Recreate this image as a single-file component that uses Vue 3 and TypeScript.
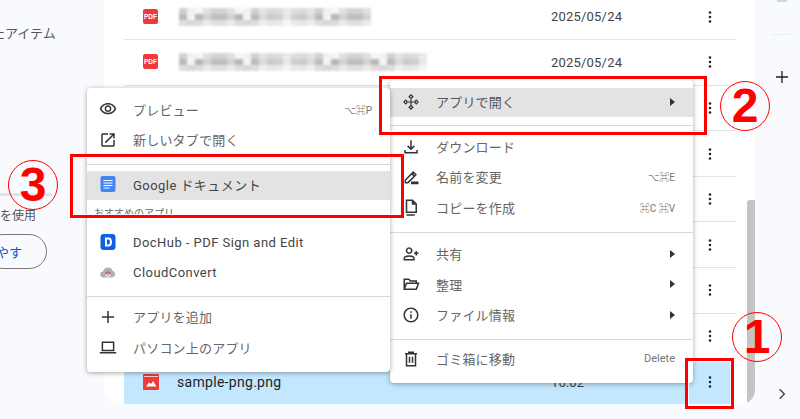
<script setup lang="ts">
interface Entry {
  label: string
  icon?: string
  hint?: string
  arrow?: boolean
}

const icons: Record<string, { d: string; stroke?: boolean }> = {
  eye: { d: 'M12 6c3.79 0 7.17 2.13 8.82 5.5C19.17 14.87 15.79 17 12 17s-7.17-2.13-8.82-5.5C4.83 8.13 8.21 6 12 6m0-2C7 4 2.73 7.11 1 11.5 2.73 15.89 7 19 12 19s9.27-3.11 11-7.5C21.27 7.11 17 4 12 4zm0 5c1.38 0 2.5 1.12 2.5 2.5S13.38 14 12 14s-2.5-1.12-2.5-2.5S10.62 9 12 9m0-2c-2.48 0-4.5 2.02-4.5 4.5S9.52 16 12 16s4.5-2.02 4.5-4.5S14.48 7 12 7z' },
  newtab: { d: 'M19 19H5V5h7V3H5c-1.11 0-2 .9-2 2v14c0 1.1.89 2 2 2h14c1.1 0 2-.9 2-2v-7h-2v7zM14 3v2h3.59l-9.83 9.83 1.41 1.41L19 6.41V10h2V3h-7z' },
  move: { stroke: true, d: 'M12 7.5v9M7.5 12h9M9.5 5 12 2.5 14.5 5 13 6.5h-2zM9.5 19l2.5 2.5 2.5-2.5-1.5-1.5h-2zM5 9.5 2.5 12 5 14.5 6.5 13v-2zM19 9.5 21.5 12 19 14.5 17.5 13v-2z' },
  download: { stroke: true, d: 'M12 3v12M7.5 10.5 12 15l4.5-4.5M4 16v3.5h16V16' },
  rename: { stroke: true, d: 'M4.5 19.5v-3.5L15 5.5l3.5 3.5L8 19.5zM13 7.5l3.5 3.5M13 19h8v1.5h-8z' },
  copy: { stroke: true, d: 'M6 3h8l5 5v11H6zM14 3v5h5M6 22.5h11' },
  share: { stroke: true, d: 'M9.5 4a3.5 3.5 0 1 0 .01 0zM3 19.5v-1.5c0-2.5 3.5-3.5 6.5-3.5s6.5 1 6.5 3.5v1.5zM19 8v6M16 11h6' },
  folder: { stroke: true, d: 'M3 19V5.5h6l2 2.5h8v3M3 19l3-8h16l-3 8z' },
  info: { d: 'M11 7h2v2h-2zm0 4h2v6h-2zm1-9C6.48 2 2 6.48 2 12s4.48 10 10 10 10-4.48 10-10S17.52 2 12 2zm0 18c-4.41 0-8-3.59-8-8s3.59-8 8-8 8 3.59 8 8-3.59 8-8 8z' },
  trash: { stroke: true, d: 'M4 5h16M9 5V3h6v2M6 5v16h12V5M10 9v8M14 9v8' },
  plus: { stroke: true, d: 'M12 4v16M4 12h16' },
  laptop: { stroke: true, d: 'M4.5 5.5h15v11h-15zM1 19.5h22' },
}

const leftTop: Entry[] = [
  { label: 'プレビュー', icon: 'eye', hint: '⌥⌘P' },
  { label: '新しいタブで開く', icon: 'newtab' },
]
const leftBottom: Entry[] = [
  { label: 'アプリを追加', icon: 'plus' },
  { label: 'パソコン上のアプリ', icon: 'laptop' },
]
const rightGroups: Entry[][] = [
  [
    { label: 'ダウンロード', icon: 'download' },
    { label: '名前を変更', icon: 'rename', hint: '⌥⌘E' },
    { label: 'コピーを作成', icon: 'copy', hint: '⌘C ⌘V' },
  ],
  [
    { label: '共有', icon: 'share', arrow: true },
    { label: '整理', icon: 'folder', arrow: true },
    { label: 'ファイル情報', icon: 'info', arrow: true },
  ],
  [{ label: 'ゴミ箱に移動', icon: 'trash', hint: 'Delete' }],
]

interface Row {
  kind: string
  cols: number
  date: string
  name?: string
}
const rows: Row[] = [
  { kind: 'pdf', cols: 24, date: '2025/05/24' },
  { kind: 'pdf', cols: 31, date: '2025/05/24' },
  { kind: 'none', cols: 0, date: '' },
  { kind: 'none', cols: 0, date: '' },
  { kind: 'none', cols: 0, date: '' },
  { kind: 'none', cols: 0, date: '' },
  { kind: 'none', cols: 0, date: '' },
  { kind: 'none', cols: 0, date: '' },
  { kind: 'png', cols: 0, date: '16:02', name: 'sample-png.png' },
]

function cells(cols: number): string[] {
  const out: string[] = []
  for (let r = 0; r < 3; r++) {
    for (let c = 0; c < cols; c++) {
      const n = (c * 37 + r * 53 + c * c * 11) % 17
      const light = r === 1 ? 70 + n * 1.6 : r === 0 ? 82 + n * 0.9 : 84 + n * 0.8
      out.push(`hsl(0 0% ${light}%)`)
    }
  }
  return out
}
</script>

<template>
  <div class="page">
    <aside class="side">
      <div class="side-label">たアイテム</div>
      <div class="storage-bar"></div>
      <div class="side-use">を使用</div>
      <div class="side-btn">やす</div>
    </aside>

    <main class="panel">
      <div class="list">
        <div v-for="(row, i) in rows" :key="i" class="row" :class="{ selected: row.kind === 'png' }">
          <span class="file-icon">
            <span v-if="row.kind === 'pdf'" class="pdf">PDF</span>
            <svg v-else-if="row.kind === 'png'" viewBox="0 0 16 16" width="16" height="16">
              <path fill="#ee3a3a" d="M1 0h14a1 1 0 0 1 1 1v14a1 1 0 0 1-1 1H1a1 1 0 0 1-1-1V1a1 1 0 0 1 1-1z" />
              <path fill="#fff" d="M3 12.5l3-4 2 1.5 2-3 3.5 5.5zM1 2h14v.8H1z" />
            </svg>
          </span>
          <span class="name">
            <span v-if="row.cols" class="mosaic" :style="{ gridTemplateColumns: `repeat(${row.cols}, 8px)` }">
              <i v-for="(c, k) in cells(row.cols)" :key="k" :style="{ background: c }"></i>
            </span>
            <template v-else>{{ row.name }}</template>
          </span>
          <span class="date">{{ row.date }}</span>
          <svg class="more" viewBox="0 0 24 24" width="18" height="18">
            <circle cx="12" cy="6" r="1.7" /><circle cx="12" cy="12" r="1.7" /><circle cx="12" cy="18" r="1.7" />
          </svg>
        </div>
      </div>
      <div class="scrollbar"></div>
    </main>

    <aside class="rail">
      <div class="rail-top"></div>
      <div class="rail-line"></div>
      <svg class="rail-plus" viewBox="0 0 24 24" width="18" height="18"><path d="M12 4v16M4 12h16" stroke="#222" stroke-width="1.8" fill="none" /></svg>
      <svg class="rail-chev" viewBox="0 0 24 24" width="14" height="14"><path d="M8 4l8 8-8 8" stroke="#444" stroke-width="2.4" fill="none" /></svg>
    </aside>

    <!-- right context menu -->
    <div class="menu menu-right">
      <div class="item active">
        <svg class="ic" viewBox="0 0 24 24"><path :d="icons.move.d" fill="none" stroke="#333" stroke-width="1.6" /></svg>
        <span class="label">アプリで開く</span>
        <span class="arrow"></span>
      </div>
      <template v-for="(group, g) in rightGroups" :key="g">
        <div class="divider" :class="{ tight: g === 0, tighter: g === 2 }"></div>
        <div v-for="e in group" :key="e.label" class="item">
          <svg class="ic" viewBox="0 0 24 24">
            <path :d="icons[e.icon!].d" :fill="icons[e.icon!].stroke ? 'none' : '#333'" :stroke="icons[e.icon!].stroke ? '#333' : 'none'" stroke-width="2" />
          </svg>
          <span class="label">{{ e.label }}</span>
          <span v-if="e.hint" class="hint" :class="{ sym: e.hint !== 'Delete' }">{{ e.hint }}</span>
          <span v-if="e.arrow" class="arrow"></span>
        </div>
      </template>
    </div>

    <!-- left sub menu -->
    <div class="menu menu-left">
      <div v-for="e in leftTop" :key="e.label" class="item">
        <svg class="ic" viewBox="0 0 24 24">
          <path :d="icons[e.icon!].d" fill="#333" />
        </svg>
        <span class="label">{{ e.label }}</span>
        <span v-if="e.hint" class="hint sym">{{ e.hint }}</span>
      </div>
      <div class="divider tight"></div>
      <div class="item active">
        <svg class="ic" viewBox="0 0 18 18">
          <rect x="1.5" y="1" width="15" height="16" rx="2" fill="#4285f4" />
          <path d="M4.5 5.5h9M4.5 8h9M4.5 10.5h9M4.5 13h6" stroke="#fff" stroke-width="1.2" />
        </svg>
        <span class="label latin">Google ドキュメント</span>
      </div>
      <div class="caption">おすすめのアプリ</div>
      <div class="item">
        <svg class="ic" viewBox="0 0 18 18">
          <rect x="1.5" y="1" width="15" height="16" rx="3" fill="#0f62e6" />
          <path d="M6 4.5h3.5c2.5 0 3.5 2 3.5 4.5s-1 4.500-3.500 4.500H6zM8 6.500v5h1.300c1.200 0 1.700-1 1.700-2.500s-.5-2.500-1.700-2.500z" fill="#fff" fill-rule="evenodd" />
        </svg>
        <span class="label latin">DocHub - PDF Sign and Edit</span>
      </div>
      <div class="item">
        <svg class="ic" viewBox="0 0 18 18">
          <path d="M4.5 14a3 3 0 0 1-.5-6 5 5 0 0 1 9.600-.8A3.500 3.500 0 0 1 13.500 14z" fill="#b0b0b0" transform="translate(0 -.5)" />
          <path d="M7 10a2 2 0 0 1 4 0" stroke="#e04040" stroke-width="1.2" fill="none" />
          <path d="M11 10.5a2 2 0 0 1-4 0" stroke="#fff" stroke-width="1" fill="none" />
        </svg>
        <span class="label latin">CloudConvert</span>
      </div>
      <div class="divider low"></div>
      <div v-for="e in leftBottom" :key="e.label" class="item">
        <svg class="ic" viewBox="0 0 24 24">
          <path :d="icons[e.icon!].d" fill="none" stroke="#333" stroke-width="2" />
        </svg>
        <span class="label">{{ e.label }}</span>
      </div>
    </div>

    <!-- annotations -->
    <div class="box box-1"></div>
    <div class="box box-2"></div>
    <div class="box box-3"></div>
    <div class="mark mark-1">1</div>
    <div class="mark mark-2">2</div>
    <div class="mark mark-3">3</div>
  </div>
</template>

<style>
html, body { margin: 0; padding: 0; background: #f8fafd; }
</style>

<style scoped>
.page {
  position: relative;
  width: 800px;
  height: 419px;
  overflow: hidden;
  background: #f8fafd;
  display: grid;
  grid-template-columns: 104px 651px 45px;
  font-family: "Roboto", "Noto Sans CJK JP", "DejaVu Sans", sans-serif;
  color: #444;
}

.side { display: flex; flex-direction: column; font-size: 13px; color: #555; overflow: hidden; }
.side-label { margin: 25px 0 0 -8px; line-height: 18px; white-space: nowrap; }
.storage-bar { width: 52px; height: 3px; background: #e1e3e6; margin-top: 150px; }
.side-use { margin-top: 11px; line-height: 18px; font-size: 12px; }
.side-btn {
  width: 62px; height: 35px; margin: 9px 0 0 -15px; box-sizing: border-box;
  border: 1px solid #777; border-radius: 18px; color: #0b57d0;
  display: flex; align-items: center; justify-content: flex-end; padding-right: 24px;
}

.panel {
  position: relative;
  height: 404px;
  background: #fff;
  border-radius: 0 0 14px 16px;
  overflow: hidden;
  padding-left: 20px;
  box-sizing: border-box;
}
.list { width: 612px; margin-top: -5.5px; }
.row {
  height: 45.6px;
  box-sizing: border-box;
  display: flex;
  align-items: center;
  border-bottom: 1px solid #e3e3e3;
  padding-left: 19px;
  font-size: 13px;
}
.row.selected { background: #c2e7ff; border-bottom: none; width: 610px; }
.file-icon { width: 16px; height: 16px; flex: none; display: flex; }
.pdf {
  width: 15px; height: 15px; border-radius: 2px; background: #ee3a3a; color: #fff;
  font: bold 6.5px/15px "Liberation Sans", sans-serif; text-align: center;
}
.name { width: 374px; margin-left: 18px; flex: none; font-size: 14px; color: #1f1f1f; letter-spacing: .3px; }
.mosaic { display: grid; grid-auto-rows: 6px; filter: blur(1.2px); margin-left: 2px; }
.mosaic i { display: block; }
.date { width: 150px; flex: none; font-size: 13px; color: #444; letter-spacing: .2px; }
.more { flex: none; fill: #222; }

.scrollbar {
  position: absolute; right: 0; top: 200px; bottom: 0; width: 8px;
  background: #c4c4c4; border-radius: 5px 0 14px 0;
}

.rail { display: flex; flex-direction: column; align-items: center; padding-left: 8px; }
.rail-top { width: 10px; height: 2px; background: #c2dcf5; }
.rail-line { width: 18px; height: 1px; background: #e4edf6; margin-top: 32px; }
.rail-plus { margin-top: 33px; }
.rail-chev { margin-top: 301px; }

.menu {
  position: absolute;
  background: #fff;
  border-radius: 4px;
  box-shadow: 0 1px 5px rgba(0, 0, 0, .35);
  box-sizing: border-box;
  font-size: 13px;
  display: flex;
  flex-direction: column;
}
.menu-left { left: 87px; top: 88px; width: 303px; height: 284px; padding-top: 7px; }
.menu-right { left: 390px; top: 80px; width: 303px; height: 303px; padding-top: 8px; }

.item {
  height: 30.4px;
  flex: none;
  display: flex;
  align-items: center;
  padding: 0 18px 2px 12px;
  box-sizing: border-box;
  color: #666;
  letter-spacing: .2px;
}
.item.active { background: #e3e3e3; height: 29.4px; color: #555; }
.ic { width: 18px; height: 18px; flex: none; margin-right: 16px; }
.label { flex: 1; white-space: nowrap; }
.label.latin { color: #444; letter-spacing: .45px; }
.hint { font-size: 11px; color: #777; letter-spacing: 0; }
.hint.sym { font-size: 10px; }
.arrow {
  width: 0; height: 0; border-left: 5px solid #333;
  border-top: 4px solid transparent; border-bottom: 4px solid transparent;
}
.divider { height: 1px; flex: none; background: #d8d8d8; margin: 8px 0 7px; }
.divider.tight { margin-bottom: 6px; }
.divider.tighter { margin-bottom: 5px; }
.divider.low { margin: 7px 0 6px; }
.caption {
  height: 27.8px; flex: none; padding: 7px 0 0 7px; box-sizing: border-box;
  font-size: 10px; color: #666; line-height: 14px; letter-spacing: 0;
}

.box {
  position: absolute;
  box-sizing: border-box;
  border: 3.5px solid #f00;
  box-shadow: inset 0 0 0 1px rgba(255, 255, 255, .85);
}
.box-1 { left: 685px; top: 358px; width: 49px; height: 51px; }
.box-2 { left: 379px; top: 76px; width: 328px; height: 59px; }
.box-3 { left: 70px; top: 154px; width: 334px; height: 64px; }

.mark {
  position: absolute;
  width: 50px; height: 50px;
  box-sizing: border-box;
  border: 1.5px solid #f00;
  border-radius: 50%;
  display: flex; align-items: center; justify-content: center;
  font: bold 48px/1 "Liberation Sans", sans-serif;
  color: #f00;
}
.mark-1 { left: 732px; top: 312px; }
.mark-2 { left: 720px; top: 81px; }
.mark-3 { left: 8px; top: 160px; }
</style>
